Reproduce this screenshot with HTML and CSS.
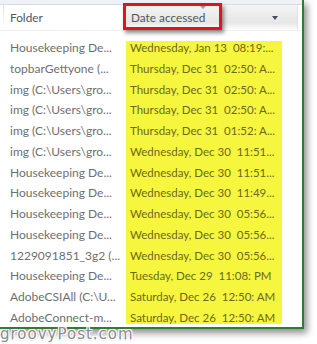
FILE: index.html
```html
<!DOCTYPE html>
<html>
<head>
<meta charset="utf-8">
<link rel="stylesheet" href="styles.css">
</head>
<body>
<div class="stage">
  <div class="window">
    <div class="topstrip"></div>
    <div class="header">
      <div class="hcol folder"><span class="sep"></span><span class="htext">Folder</span></div>
      <div class="hcol date">
        <span class="htext">Date accessed</span>
        <span class="sortmark"></span>
        <span class="dropdown"></span>
      </div>
      <div class="redbox"></div>
    </div>
    <div class="list">
      <div class="col names">
        <div class="row">Housekeeping De...</div>
        <div class="row">topbarGettyone (...</div>
        <div class="row">img (C:\Users\gro...</div>
        <div class="row">img (C:\Users\gro...</div>
        <div class="row">img (C:\Users\gro...</div>
        <div class="row">img (C:\Users\gro...</div>
        <div class="row">Housekeeping De...</div>
        <div class="row">Housekeeping De...</div>
        <div class="row">Housekeeping De...</div>
        <div class="row">Housekeeping De...</div>
        <div class="row">1229091851_3g2 (...</div>
        <div class="row">Housekeeping De...</div>
        <div class="row">AdobeCSIAll (C:\U...</div>
        <div class="row">AdobeConnect-m...</div>
      </div>
      <div class="col dates">
        <div class="row">Wednesday, Jan 13&nbsp; 08:19:...</div>
        <div class="row">Thursday, Dec 31&nbsp; 02:50: A...</div>
        <div class="row">Thursday, Dec 31&nbsp; 02:50: A...</div>
        <div class="row">Thursday, Dec 31&nbsp; 02:50: A...</div>
        <div class="row">Thursday, Dec 31&nbsp; 01:52: A...</div>
        <div class="row">Wednesday, Dec 30&nbsp; 11:51...</div>
        <div class="row">Wednesday, Dec 30&nbsp; 11:51...</div>
        <div class="row">Wednesday, Dec 30&nbsp; 11:49...</div>
        <div class="row">Wednesday, Dec 30&nbsp; 05:56...</div>
        <div class="row">Wednesday, Dec 30&nbsp; 05:56...</div>
        <div class="row">Wednesday, Dec 30&nbsp; 05:56...</div>
        <div class="row">Tuesday, Dec 29&nbsp; 11:08: PM</div>
        <div class="row">Saturday, Dec 26&nbsp; 12:50: AM</div>
        <div class="row">Saturday, Dec 26&nbsp; 12:50: AM</div>
      </div>
    </div>
  </div>
  <div class="watermark">groovyPost.com</div>
</div>
</body>
</html>
```

FILE: styles.css
```css
html, body {
  margin: 0;
  padding: 0;
  background: #ffffff;
}
.stage {
  position: relative;
  width: 317px;
  height: 344px;
  overflow: hidden;
  font-family: "Lato", "Open Sans", sans-serif;
}
.window {
  width: 302px;
  height: 327px;
  background: #ffffff;
  border-right: 2px solid #2f7d32;
  border-bottom: 2px solid #2f7d32;
  box-shadow: 3px 4px 7px rgba(0, 0, 0, 0.45);
  overflow: hidden;
}
.topstrip {
  height: 4px;
  background: #eef2f7;
  border-bottom: 1px solid #d7dde5;
}
.header {
  position: relative;
  display: flex;
  height: 25px;
  border-bottom: 1px solid #f0f0f0;
}
.hcol {
  position: relative;
  display: flex;
  align-items: center;
  font-size: 11.8px;
  color: #4f5661;
}
.hcol.folder {
  width: 123px;
  padding-left: 10px;
  box-sizing: border-box;
}
.sep {
  position: absolute;
  left: 3px;
  top: 0;
  width: 1px;
  height: 22px;
  background: linear-gradient(#dedede, #ffffff);
}
.hcol.date {
  width: 175px;
  padding-left: 8px;
  box-sizing: border-box;
  border-right: 1px solid #e3e3e3;
  background: linear-gradient(#f4f4f4, #e6e6e6 70%, #ffffff);
}
.htext {
  line-height: 14px;
}
.sortmark {
  position: absolute;
  left: 77px;
  top: 1px;
  width: 0;
  height: 0;
  border-left: 3px solid transparent;
  border-right: 3px solid transparent;
  border-top: 3px solid #8fa3ba;
}
.dropdown {
  position: absolute;
  left: 149px;
  top: 11px;
  width: 0;
  height: 0;
  border-left: 3.5px solid transparent;
  border-right: 3.5px solid transparent;
  border-top: 4px solid #3f4e60;
}
.redbox {
  position: absolute;
  left: 123px;
  top: -2px;
  width: 93px;
  height: 21px;
  border: 3px solid #e3121b;
  box-shadow: 2px 3px 4px rgba(0, 0, 0, 0.45);
}
.list {
  display: grid;
  grid-template-columns: 126px 156px;
  padding-top: 10px;
}
.col {
  height: 283px;
  font-size: 12px;
}
.col.names {
  padding-left: 10px;
  box-sizing: border-box;
  color: #6f6f6f;
}
.col.dates {
  background: #f6f63e;
  padding-left: 4px;
  color: #6b6a1c;
  box-sizing: border-box;
  font-size: 11.5px;
}
.row {
  height: 20.75px;
  line-height: 14px;
  white-space: nowrap;
}
.watermark {
  position: absolute;
  left: 0;
  top: 326px;
  font-family: "DejaVu Sans", sans-serif;
  font-size: 15px;
  letter-spacing: 1px;
  line-height: 17px;
  color: #8c8c8c;
  text-shadow: 1px 1px 0 #ffffff, -1px -1px 0 #ffffff, 1px -1px 0 #ffffff, -1px 1px 0 #ffffff, 0 1px 1px #555555;
}
```
